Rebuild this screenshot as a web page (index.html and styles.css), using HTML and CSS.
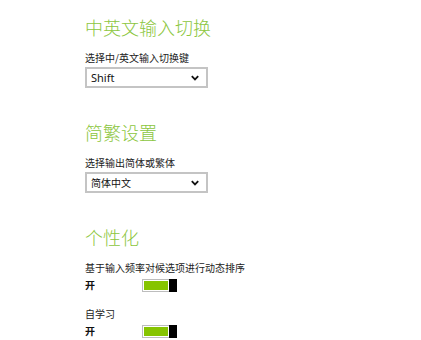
FILE: index.html
```html
<!DOCTYPE html>
<html lang="zh-CN">
<head>
<meta charset="utf-8">
<link rel="stylesheet" href="styles.css">
</head>
<body>
<div class="page">
  <section class="section">
    <h2 class="heading">中英文输入切换</h2>
    <div class="label">选择中/英文输入切换键</div>
    <div class="select"><span class="select-text latin">Shift</span>
      <svg class="chev" width="8" height="6" viewBox="0 0 8 6"><path d="M0.8 1.2 L4 4.4 L7.2 1.2" fill="none" stroke="#111" stroke-width="1.8"/></svg>
    </div>
  </section>
  <section class="section">
    <h2 class="heading">简繁设置</h2>
    <div class="label">选择输出简体或繁体</div>
    <div class="select"><span class="select-text">简体中文</span>
      <svg class="chev" width="8" height="6" viewBox="0 0 8 6"><path d="M0.8 1.2 L4 4.4 L7.2 1.2" fill="none" stroke="#111" stroke-width="1.8"/></svg>
    </div>
  </section>
  <section class="section">
    <h2 class="heading">个性化</h2>
    <div class="label">基于输入频率对候选项进行动态排序</div>
    <div class="toggle-row"><span class="state">开</span><span class="toggle"><span class="fill"></span><span class="thumb"></span></span></div>
    <div class="label label-gap">自学习</div>
    <div class="toggle-row"><span class="state">开</span><span class="toggle"><span class="fill"></span><span class="thumb"></span></span></div>
  </section>
</div>
</body>
</html>
```
FILE: styles.css
```css
html, body {
  margin: 0;
  padding: 0;
  background: #ffffff;
}
body {
  font-family: "Noto Sans", "Noto Sans CJK SC", sans-serif;
  color: #1a1a1a;
}
.page {
  padding: 15px 0 0 85px;
}
.section + .section {
  margin-top: 32px;
}
.heading {
  margin: 0;
  font-family: "Noto Sans CJK SC", sans-serif;
  font-weight: 300;
  font-size: 18px;
  line-height: 24px;
  color: #8cc640;
}
.label {
  margin-top: 12px;
  font-family: "Noto Sans CJK SC", sans-serif;
  font-size: 10px;
  line-height: 14px;
  color: #222;
}
.label-gap {
  margin-top: 15px;
}
.select {
  margin-top: 2px;
  width: 123px;
  height: 21px;
  box-sizing: border-box;
  border: 2px solid #c4c4c4;
  display: flex;
  align-items: center;
  justify-content: space-between;
  padding: 0 7px 0 4px;
}
.select-text {
  font-family: "Noto Sans CJK SC", sans-serif;
  font-size: 10px;
  line-height: 14px;
  color: #111;
}
.select-text.latin {
  font-family: "Noto Sans", "Noto Sans CJK SC", sans-serif;
  font-size: 11px;
}
.chev {
  display: block;
}
.toggle-row {
  margin-top: 3px;
  display: flex;
  align-items: center;
  height: 14px;
}
.state {
  width: 57px;
  font-family: "Noto Sans CJK SC", sans-serif;
  font-weight: 700;
  font-size: 10px;
  line-height: 14px;
  color: #111;
}
.toggle {
  display: flex;
  width: 35px;
  height: 13px;
  box-sizing: border-box;
  border: 1px solid #bdbdbd;
  background: #fff;
}
.fill {
  flex: 1;
  margin: 1px;
  background: #86c400;
}
.thumb {
  width: 8px;
  margin: -1px -1px -1px 0;
  background: #000;
}
```
